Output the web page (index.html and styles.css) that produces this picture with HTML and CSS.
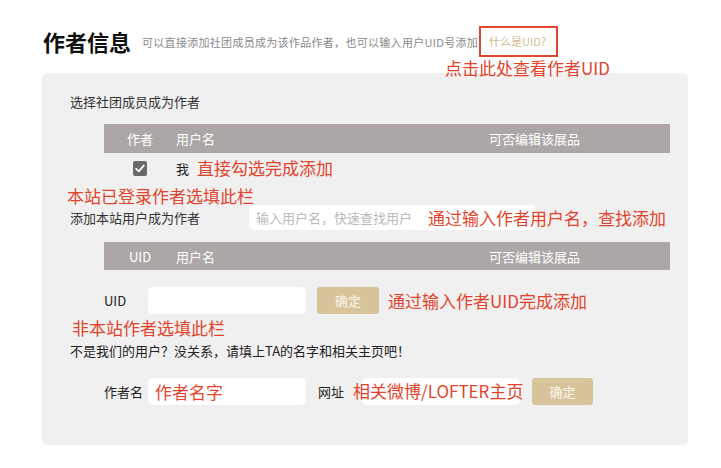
FILE: index.html
```html
<!DOCTYPE html>
<html lang="zh-CN">
<head>
    <meta charset="UTF-8">
    <meta name="viewport" content="width=device-width, initial-scale=1.0">
    <title>作者信息</title>
    <link rel="stylesheet" href="styles.css">
</head>
<body>
    <div class="page">
        <div class="head">
            <h1 class="title">作者信息</h1>
            <span class="desc">可以直接添加社团成员成为该作品作者，也可以输入用户UID号添加</span>
            <a class="what-uid" href="#">什么是UID?<span class="note note-uid">点击此处查看作者UID</span></a>
        </div>

        <div class="panel">
            <div class="label">选择社团成员成为作者</div>
            <div class="th">
                <span class="col-a">作者</span>
                <span class="col-b">用户名</span>
                <span>可否编辑该展品</span>
            </div>
            <div class="check-row">
                <span class="checkbox">
                    <svg width="10" height="9" viewBox="0 0 10 9"><path d="M1.2 4.8 L3.8 7.3 L8.8 1.5" fill="none" stroke="#fff" stroke-width="1.8" stroke-linecap="round" stroke-linejoin="round"/></svg>
                </span>
                <span class="me">我</span>
                <span class="note">直接勾选完成添加</span>
            </div>

            <!-- 本站用户 -->
            <div class="note note-line note-site">本站已登录作者选填此栏</div>
            <div class="add-row">
                <span class="add-label">添加本站用户成为作者</span>
                <span class="field-wrap">
                    <input class="field field-search" type="text" placeholder="输入用户名，快速查找用户">
                    <span class="note note-over">通过输入作者用户名，查找添加</span>
                </span>
            </div>
            <div class="th th-uid">
                <span class="col-a">UID</span>
                <span class="col-b">用户名</span>
                <span>可否编辑该展品</span>
            </div>
            <div class="form-row uid-row">
                <span class="form-label">UID</span>
                <input class="field field-short" type="text">
                <button class="btn">确定</button>
                <span class="note note-after">通过输入作者UID完成添加</span>
            </div>

            <!-- 非本站作者 -->
            <div class="note note-line note-ext">非本站作者选填此栏</div>
            <div class="tip">不是我们的用户？没关系，请填上TA的名字和相关主页吧！</div>
            <div class="form-row author-row">
                <span class="form-label">作者名</span>
                <input class="field field-short field-red" type="text" value="作者名字">
                <span class="form-label url-label">网址</span>
                <span class="field-wrap">
                    <input class="field field-short" type="text">
                    <span class="note note-url">相关微博/LOFTER主页</span>
                </span>
                <button class="btn btn-author">确定</button>
            </div>
        </div>
    </div>
</body>
</html>
```

FILE: styles.css
```css
* {
    box-sizing: border-box;
}
body {
    margin: 0;
    background: #fff;
    font-family: "Noto Sans CJK SC", "Noto Sans", sans-serif;
    font-size: 13px;
    color: #333;
}
.page {
    width: 688px;
    padding: 26px 0 0 42px;
}
.head {
    display: flex;
    align-items: center;
    height: 31px;
}
.title {
    margin: 0 11px 0 1px;
    font-size: 22px;
    font-weight: bold;
    line-height: 31px;
    color: #111;
}
.desc {
    font-size: 11px;
    letter-spacing: 0.3px;
    color: #8a8a8a;
    white-space: nowrap;
}
.what-uid {
    position: relative;
    height: 31px;
    margin-left: 1px;
    padding: 0 10px 0 8px;
    border: 2px solid #e1462f;
    font-size: 11px;
    line-height: 27px;
    color: #cfc08f;
    text-decoration: none;
    white-space: nowrap;
}
.note {
    font-size: 17px;
    line-height: 22px;
    color: #e2432c;
    white-space: nowrap;
}
.note-uid {
    position: absolute;
    left: -36px;
    top: calc(100% + 2px);
}
.panel {
    width: 646px;
    margin-top: 16px;
    padding: 19px 18px 40px 28px;
    background: #f0f0f0;
    border-radius: 6px;
}
.label {
    line-height: 20px;
}
.th {
    display: flex;
    align-items: center;
    height: 29px;
    margin: 12px 0 0 34px;
    padding-left: 23px;
    background: #aca7a6;
    color: #fff;
}
.col-a {
    width: 49px;
}
.col-b {
    width: 313px;
}
.check-row {
    display: flex;
    align-items: center;
    height: 30px;
    margin-left: 34px;
}
.checkbox {
    display: flex;
    align-items: center;
    justify-content: center;
    width: 14px;
    height: 15px;
    margin: 0 29px;
    background: #696969;
    border-radius: 2px;
}
.me {
    margin-right: 8px;
    color: #222;
}
.note-line {
    margin-top: 2px;
}
.note-site {
    margin-left: -3px;
}
.add-row {
    display: flex;
    align-items: center;
    height: 25px;
    margin-top: -2px;
}
.add-label {
    width: 179px;
}
.field-wrap {
    position: relative;
    display: flex;
}
.field {
    height: 27px;
    padding: 0 7px;
    border: none;
    border-radius: 5px;
    background: #fff;
    outline: none;
    font-family: inherit;
    font-size: 13px;
    color: #333;
}
.field-search {
    width: 287px;
    height: 25px;
}
.field-search::placeholder {
    color: #bababa;
}
.note-over {
    position: absolute;
    left: 179px;
    top: 2px;
}
.th-uid {
    height: 28px;
}
.th-uid .col-a {
    padding-left: 2px;
}
.form-row {
    display: flex;
    align-items: center;
    height: 27px;
    margin-left: 34px;
}
.uid-row {
    margin-top: 17px;
}
.form-label {
    width: 44px;
    color: #222;
}
.field-short {
    width: 158px;
}
.btn {
    width: 62px;
    height: 27px;
    margin-left: 11px;
    border: none;
    border-radius: 3px;
    background: #d8c49b;
    font-family: inherit;
    font-size: 13px;
    color: #fbf6ec;
}
.note-after {
    margin-left: 9px;
}
.note-ext {
    margin: 4px 0 0 2px;
    line-height: 20px;
}
.tip {
    margin-top: 4px;
    line-height: 18px;
    color: #222;
}
.author-row {
    margin-top: 18px;
}
.field-red {
    font-size: 17px;
    color: #e2432c;
}
.url-label {
    margin-left: 12px;
}
.note-url {
    position: absolute;
    left: -9px;
    top: 2px;
}
.btn-author {
    width: 61px;
    margin-left: 12px;
}
```
